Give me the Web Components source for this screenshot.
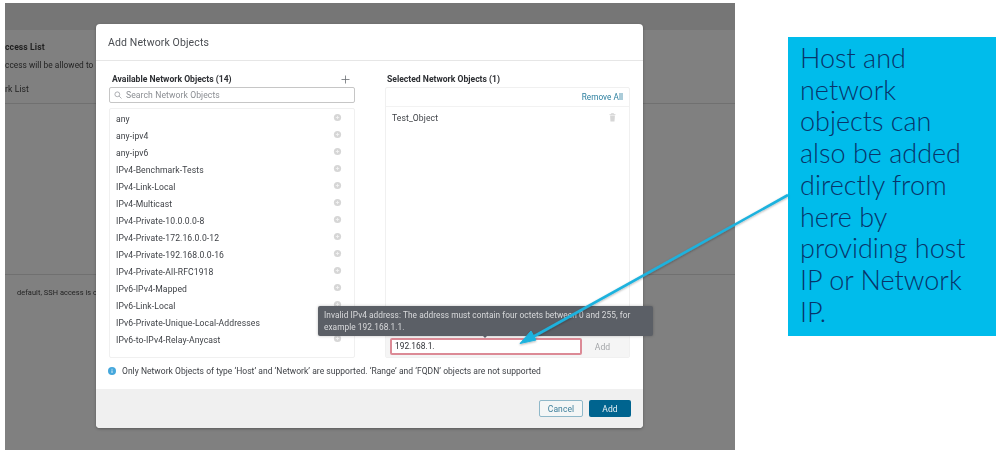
<!DOCTYPE html>
<html><head><meta charset="utf-8">
<style>
html,body{margin:0;padding:0;background:#fff;}
body{width:999px;height:452px;overflow:hidden;font-family:"Roboto","Liberation Sans",sans-serif;}
</style></head><body>
<slide-stage></slide-stage>
<script>
const ADD='<svg width="9" height="9" viewBox="0 0 9 9"><circle cx="4.5" cy="4.5" r="3.6" fill="#d6d6d6"/><path d="M4.5 2.8v3.4M2.8 4.5h3.4" stroke="#f2f2f2" stroke-width=".9"/></svg>';
function def(name,css,html){
  customElements.define(name,class extends HTMLElement{
    constructor(){super();const s=this.attachShadow({mode:'open'});
      s.innerHTML='<style>'+css+'</style>'+html;}
  });
}
def('object-row',`
:host{display:flex;align-items:center;justify-content:space-between;height:17.05px;font:8.6px/17px "Roboto","Liberation Sans",sans-serif;letter-spacing:.09px;color:#3c3f44;padding:0 12px 0 6px;}
svg{display:block;margin-top:-4px}`,'<span><slot></slot></span>'+ADD);
def('available-panel',`
:host{display:flex;flex-direction:column;width:246px;}
.t{display:flex;justify-content:space-between;align-items:center;height:16px;padding:0 3px;font:700 8.6px/16px "Roboto","Liberation Sans",sans-serif;color:#2d2f33;}
.t svg{margin-right:2px;margin-top:1px}
.s{display:flex;align-items:center;gap:4px;height:16px;box-sizing:border-box;border:1px solid #c6c6c6;border-radius:2px;padding:0 4px;font:8.6px "Roboto","Liberation Sans",sans-serif;letter-spacing:.09px;color:#8a8d92;}
.l{box-sizing:border-box;height:250px;margin-top:5px;border:1px solid #f0f0f0;border-radius:2px;padding-top:1.5px;}`,
`<div class="t"><span>Available Network Objects (14)</span><svg width="9" height="9" viewBox="0 0 9 9"><path d="M4.5 .5v8M.5 4.5h8" stroke="#6a6d72" stroke-width=".8"/></svg></div>
<div class="s"><svg width="8" height="8" viewBox="0 0 8 8" fill="none" stroke="#a5a7ab" stroke-width=".9"><circle cx="3.3" cy="3.3" r="2.4"/><path d="M5.1 5.1L7.5 7.5"/></svg>Search Network Objects</div>
<div class="l"><slot></slot></div>`);
def('selected-panel',`
:host{display:flex;flex-direction:column;width:245px;}
.t{height:16px;padding:0 2px;font:700 8.6px/16px "Roboto","Liberation Sans",sans-serif;color:#2d2f33;}
.b{box-sizing:border-box;height:271px;border:1px solid #f0f0f0;border-radius:2px;display:flex;flex-direction:column;font:8.6px "Roboto","Liberation Sans",sans-serif;letter-spacing:.09px;}
.h{height:18px;border-bottom:1px solid #f2f2f2;display:flex;align-items:center;justify-content:flex-end;padding:0 6px;color:#2b7f9f;font-size:8.2px;letter-spacing:.05px}
.r{display:flex;justify-content:space-between;align-items:center;padding:0 13px 0 6px;height:21px;color:#3c3f44;}
.g{flex:1}
.f{height:21px;background:#f5f5f5;display:flex;align-items:center;padding:0 0 0 4px;}
.i{box-sizing:border-box;width:192px;height:17px;border:2px solid #dc8a96;border-radius:2px;background:#fff;padding-left:3px;color:#2f3136;line-height:13px;font-size:8.4px;letter-spacing:0;}
.a{width:41px;text-align:center;color:#a4a6a9;}`,
`<div class="t">Selected Network Objects (1)</div>
<div class="b"><div class="h">Remove All</div>
<div class="r"><span>Test_Object</span><svg width="7" height="9" viewBox="0 0 7 9"><path d="M.5 1.6h6M2.4 1.4V.6h2.2v.8" stroke="#cfcfcf" stroke-width=".8" fill="none"/><path d="M1.1 2.4h4.8L5.5 8.5h-4z" fill="#d6d6d6"/></svg></div>
<div class="g"></div>
<div class="f"><div class="i"><slot></slot></div><div class="a">Add</div></div></div>`);
def('error-tip',`
:host{position:absolute;left:222px;top:282px;width:335px;height:30px;box-sizing:border-box;background:#5b5f66;border-radius:2px;box-shadow:0 0 3px rgba(0,0,0,.25);color:#d9dadc;font:8.3px/12px "Roboto","Liberation Sans",sans-serif;letter-spacing:.05px;padding:3px 6px;z-index:2;}
:host::after{content:"";position:absolute;left:165px;top:30px;border:2px solid transparent;border-top:2.5px solid #5b5f66;}`,'<slot></slot>');
def('net-modal',`
:host{position:absolute;left:91px;top:21px;width:547px;height:404px;background:#fff;border-radius:4px;box-shadow:0 1px 3px rgba(0,0,0,.3);display:flex;flex-direction:column;overflow:visible;}
header{height:36px;border-bottom:1px solid #e6e6e6;padding:0 0 0 12px;font:10.5px/37px "Roboto","Liberation Sans",sans-serif;letter-spacing:.12px;color:#4a4d52;}
.c{height:289px;display:flex;gap:30px;padding:10px 0 0 13px;align-items:flex-start;}
.n{display:flex;align-items:center;gap:6px;height:22px;margin-bottom:7px;padding-left:12px;font:8.5px "Roboto","Liberation Sans",sans-serif;letter-spacing:.03px;color:#3c3f44;}
footer{height:39px;background:#f0f0f0;border-radius:0 0 4px 4px;display:flex;justify-content:flex-end;align-items:center;gap:6px;padding:0 12px 0 0;font:8.5px "Roboto","Liberation Sans",sans-serif;letter-spacing:.1px;}
.b{box-sizing:border-box;height:17px;border-radius:2px;display:flex;align-items:center;justify-content:center;}
.x{width:44px;border:1px solid #8fb8c9;color:#3e7f9b;background:#f4f6f6}
.y{width:42px;background:#00648f;color:#e8f2f6}`,
`<header>Add Network Objects</header>
<div class="c"><slot name="left"></slot><slot name="right"></slot></div>
<div class="n"><svg width="8" height="8" viewBox="0 0 8 8"><circle cx="4" cy="4" r="4" fill="#45a7dc"/><path d="M4 3.4v2.6M4 1.8v.9" stroke="#d9eef9" stroke-width="1"/></svg><span>Only Network Objects of type ‘Host’ and ‘Network’ are supported. ‘Range’ and ‘FQDN’ objects are not supported</span></div>
<footer><div class="b x">Cancel</div><div class="b y">Add</div></footer><slot name="tip"></slot>`);
def('app-backdrop',`
:host{display:block;position:relative;width:730px;height:447px;background:#808080;overflow:hidden;}
.top{height:27px;background:#767676}
.m{font:8.6px/14px "Roboto","Liberation Sans",sans-serif;letter-spacing:.09px;color:#1f1f1f;white-space:nowrap;}
.a{font-weight:700;padding-top:10px;}
.b{padding-top:4px;font-size:8.3px;letter-spacing:.05px}
.c{padding-top:10px;}
.d{height:7px;border-bottom:1px solid #707070}
.e{height:170px;border-bottom:1px solid #707070}
.f{padding-top:11px;margin-left:12px;font-size:7.4px;letter-spacing:.06px}`,
`<div class="top"></div><div class="m a">ccess List</div><div class="m b">ccess will be allowed to</div><div class="m c">rk List</div><div class="d"></div><div class="e"></div><div class="m f">default, SSH access is c</div><slot></slot>`);
def('call-out',`
:host{display:block;box-sizing:border-box;width:208px;height:299px;background:#00bceb;color:#08346a;padding:5px 12px 0;font:300 27px/31.7px "Lato","Liberation Sans",sans-serif;}`,'<slot></slot>');
def('slide-stage',`
:host{display:flex;position:relative;width:999px;height:452px;box-sizing:border-box;padding:3px 3px 1px 5px;gap:53px;background:#fff;align-items:flex-start;}
app-backdrop{filter:blur(.3px)}
call-out{margin-top:34px}
svg{position:absolute;left:0;top:0;z-index:5;pointer-events:none}`,
`<app-backdrop>
<net-modal>
<available-panel slot="left">
${['any','any-ipv4','any-ipv6','IPv4-Benchmark-Tests','IPv4-Link-Local','IPv4-Multicast','IPv4-Private-10.0.0.0-8','IPv4-Private-172.16.0.0-12','IPv4-Private-192.168.0.0-16','IPv4-Private-All-RFC1918','IPv6-IPv4-Mapped','IPv6-Link-Local','IPv6-Private-Unique-Local-Addresses','IPv6-to-IPv4-Relay-Anycast'].map(t=>`<object-row>${t}</object-row>`).join('')}
</available-panel>
<selected-panel slot="right">192.168.1.</selected-panel>
<error-tip slot="tip">Invalid IPv4 address: The address must contain four octets between 0 and 255, for example 192.168.1.1.</error-tip>
</net-modal>
</app-backdrop>
<call-out>Host and network objects can also be added directly from here by providing host IP or Network IP.</call-out>
<svg width="999" height="452" viewBox="0 0 999 452"><defs><filter id="s" x="-10%" y="-10%" width="120%" height="130%"><feDropShadow dx="0" dy="1" stdDeviation="1" flood-color="#000" flood-opacity=".3"/></filter></defs>
<g filter="url(#s)"><path d="M788 195L531 338" stroke="#1fb2de" stroke-width="2.6" fill="none"/><path d="M520 343.5L531 331 536 340z" fill="#1fb2de" stroke="#1fb2de" stroke-width="1"/></g></svg>`);
</script>
</body></html>
